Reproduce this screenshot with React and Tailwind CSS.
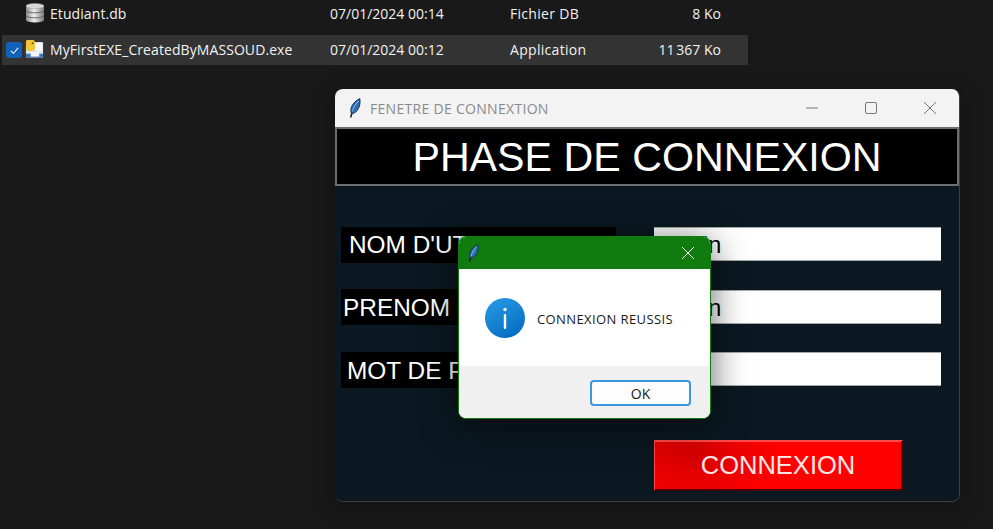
const segoe = "font-['Open_Sans','Noto_Sans',sans-serif]";
const arial = "font-['Liberation_Sans',Arial,sans-serif]";

function Feather({ className }) {
  return (
    <svg viewBox="0 0 12 20" className={className}>
      <path d="M1.6 19.5 L3 15" stroke="#1a1a1a" strokeWidth="1.6" fill="none" />
      <path d="M2.4 15.5 C0.6 11 3 4.5 10.8 0.6 C11.8 6 10 12.5 5.2 15 L2.4 15.5 Z" fill="#2f6fb5" stroke="#14263c" strokeWidth="0.9" />
      <path d="M3.4 13.5 C4.5 9.5 6.5 6 9.6 3" stroke="#9cc7ef" strokeWidth="0.9" fill="none" />
    </svg>
  );
}

function DbIcon() {
  return (
    <svg viewBox="0 0 20 20" className="w-[20px] h-[20px] shrink-0">
      <defs>
        <linearGradient id="db" x1="0" x2="1" y1="0" y2="0">
          <stop offset="0" stopColor="#8a8a8a" />
          <stop offset="0.45" stopColor="#f0f0f0" />
          <stop offset="1" stopColor="#7a7a7a" />
        </linearGradient>
      </defs>
      <rect x="1" y="3" width="18" height="14" fill="url(#db)" />
      <ellipse cx="10" cy="17" rx="9" ry="2.6" fill="url(#db)" />
      <ellipse cx="10" cy="3" rx="9" ry="2.6" fill="#d8d8d8" stroke="#9a9a9a" strokeWidth="0.5" />
      <path d="M1 8 C4 10.4 16 10.4 19 8 M1 13 C4 15.4 16 15.4 19 13" stroke="#5e5e5e" strokeWidth="0.9" fill="none" />
    </svg>
  );
}

function ExeIcon() {
  return (
    <svg viewBox="0 0 20 20" className="w-[19px] h-[20px] shrink-0">
      <path d="M3 3 H19 V19 H1 V8 Z" fill="#dfe6ee" />
      <rect x="1" y="15" width="18" height="4" fill="#3f78b8" />
      <rect x="6" y="13" width="9" height="5" fill="#f4f4f4" />
      <rect x="11" y="3" width="7" height="9" fill="#f7f9fb" />
      <path d="M3 0.5 H8 C10 0.5 10.5 2 10.5 3 V9 C10.5 11 9 12 7 12 H3.5 C2 12 1 11 1 9.5 V2.5 C1 1.2 1.8 0.5 3 0.5 Z" fill="#f2c63a" />
      <circle cx="8" cy="4" r="1" fill="#5a4a10" />
    </svg>
  );
}

function FileRow({ icon, check, name, date, kind, size, selected }) {
  return (
    <div className={`flex items-center ml-[2px] w-[746px] text-[14px] text-[#f2f2f2] pb-[2px] ${selected ? "h-[30px] bg-[#333333]" : "h-[28px]"}`}>
      <div className="w-[23px] pl-[4px] pt-[2px] shrink-0">{check}</div>
      <div className="w-[25px] shrink-0">{icon}</div>
      <div className="w-[280px] shrink-0 whitespace-nowrap tracking-[0.08px]">{name}</div>
      <div className="w-[180px] shrink-0 whitespace-nowrap">{date}</div>
      <div className="w-[130px] shrink-0 whitespace-nowrap tracking-[0.3px]">{kind}</div>
      <div className="w-[81px] shrink-0 text-right whitespace-nowrap">{size}</div>
    </div>
  );
}

function FormRow({ label, labelPad, value, rowClass, inputClass }) {
  return (
    <div className={`flex items-start ${rowClass}`}>
      <div className={`w-[275px] h-[36px] bg-black flex items-center text-[24.4px] leading-none text-white whitespace-nowrap overflow-hidden ${labelPad}`}>
        {label}
      </div>
      <div className={`ml-[38px] w-[287px] h-[34px] bg-white border-y border-[#a8a8a8] pl-[2px] pt-[2px] flex items-center text-[24px] leading-none text-black ${inputClass}`}>
        {value}
      </div>
    </div>
  );
}

export default function App() {
  return (
    <div className={`relative w-[993px] h-[529px] overflow-hidden bg-[#191919] ${segoe}`}>
      {/* Explorer rows */}
      <div className="flex flex-col gap-[7px]">
        <FileRow icon={<DbIcon />} name="Etudiant.db" date="07/01/2024 00:14" kind="Fichier DB" size="8 Ko" />
        <FileRow
          selected
          check={
            <div className="w-[16px] h-[16px] rounded-[3px] bg-[#0f62b8] flex items-center justify-center">
              <svg viewBox="0 0 12 12" className="w-[11px] h-[11px]">
                <path d="M2 6.4 L4.8 9 L10 3.2" stroke="#fff" strokeWidth="1.1" fill="none" />
              </svg>
            </div>
          }
          icon={<ExeIcon />}
          name="MyFirstEXE_CreatedByMASSOUD.exe"
          date="07/01/2024 00:12"
          kind="Application"
          size={"11\u202f367 Ko"}
        />
      </div>

      {/* Main window */}
      <div className="absolute left-[335px] top-[89px] w-[625px] h-[413px] rounded-[8px] overflow-hidden flex flex-col bg-[#0b1821] border-r border-b border-[#3a3f43] shadow-[0_4px_24px_rgba(0,0,0,0.35)]">
        <div className="h-[38px] shrink-0 bg-[#f3f3f3] flex items-center pl-[14px]">
          <Feather className="w-[12px] h-[20px] mr-[9px]" />
          <span className="text-[14px] text-[#8a8a8a] tracking-[0.3px] whitespace-nowrap">FENETRE DE CONNEXTION</span>
          <div className="ml-auto flex items-center">
            <svg viewBox="0 0 71 14" className="w-[71px] h-[14px]">
              <path d="M0 7 H12" stroke="#777" strokeWidth="1" />
              <rect x="59.5" y="1.5" width="11" height="11" rx="1.5" stroke="#777" fill="none" />
            </svg>
            <svg viewBox="0 0 14 14" className="ml-[46px] mr-[22px] w-[14px] h-[14px]">
              <path d="M1 1 L13 13 M13 1 L1 13" stroke="#777" strokeWidth="1" />
            </svg>
          </div>
        </div>
        <div className={`h-[59px] shrink-0 bg-black border-2 border-[#6e6e6e] pt-[2px] flex items-center justify-center text-[41.2px] leading-none text-white whitespace-nowrap ${arial}`}>
          PHASE DE CONNEXION
        </div>
        <div className={`flex flex-col pl-[6px] ${arial}`}>
          <FormRow rowClass="mt-[41px]" labelPad="pl-[8px]" label="NOM D'UTILISATEUR" value="admin" />
          <FormRow rowClass="mt-[26px]" labelPad="pl-[2px] pt-[2px]" label="PRENOM" value="admin" inputClass="mt-px" />
          <FormRow rowClass="mt-[27px]" labelPad="pl-[6px] pt-[2px]" label="MOT DE PASSE" value="" />
          <div className="mt-[52px] ml-[313px] w-[249px] h-[51px] bg-[#ff0000] border-t-2 border-l border-[#ff4b4b] border-r-2 border-b-2 border-r-[#3a0000] border-b-[#4a0000] flex items-center justify-center text-[25.5px] leading-none text-[#ffe6e6] bg-[radial-gradient(ellipse_90px_50px_at_15%_30%,#d40000,#ff0000)]">
            CONNEXION
          </div>
        </div>
      </div>

      {/* Message box */}
      <div className="absolute left-[458px] top-[236px] w-[253px] h-[183px] rounded-[8px] overflow-hidden flex flex-col border border-[#107c10] bg-white shadow-[0_6px_36px_rgba(0,0,0,0.6)]">
        <div className="h-[32px] shrink-0 bg-[#107c10] flex items-center justify-between pl-[9px] pr-[15px]">
          <Feather className="w-[11px] h-[20px]" />
          <svg viewBox="0 0 14 14" className="w-[14px] h-[14px]">
            <path d="M1 1 L13 13 M13 1 L1 13" stroke="#fff" strokeWidth="1" />
          </svg>
        </div>
        <div className="h-[97px] shrink-0 bg-white flex items-center pl-[26px]">
          <svg viewBox="0 0 40 40" className="w-[40px] h-[40px] shrink-0">
            <defs>
              <linearGradient id="info" x1="0" x2="0.6" y1="0" y2="1">
                <stop offset="0" stopColor="#2a9ce6" />
                <stop offset="1" stopColor="#0670c4" />
              </linearGradient>
            </defs>
            <circle cx="20" cy="20" r="20" fill="url(#info)" />
            <circle cx="20" cy="11.5" r="1.7" fill="#fff" />
            <rect x="18.8" y="16" width="2.4" height="15" rx="1" fill="#fff" />
          </svg>
          <span className="ml-[12px] pt-[5px] text-[13px] text-[#1a1a1a] tracking-[0.4px] whitespace-nowrap">CONNEXION REUSSIS</span>
        </div>
        <div className="flex-1 bg-[#f0f0f0] flex items-start justify-end pt-[14px] pr-[19px]">
          <div className="w-[101px] h-[26px] rounded-[4px] bg-[#fdfdfd] border-2 border-[#3a96dd] pt-px flex items-center justify-center text-[14px] text-[#1a1a1a]">
            OK
          </div>
        </div>
      </div>
    </div>
  );
}
